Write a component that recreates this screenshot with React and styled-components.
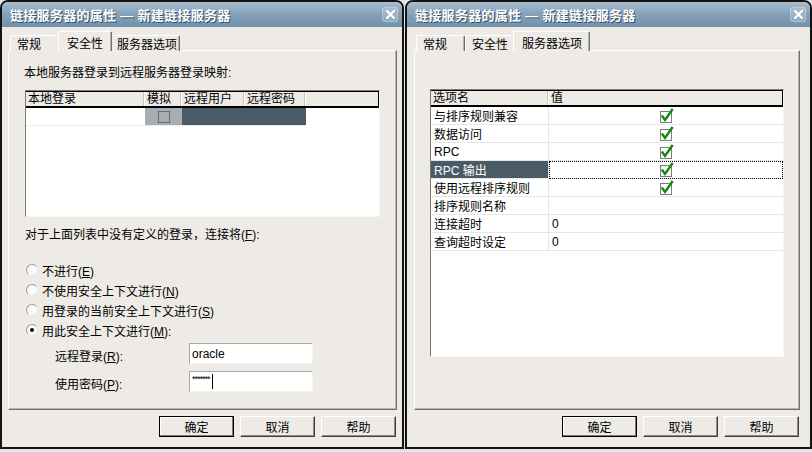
import React from "react";
import styled, { createGlobalStyle } from "styled-components";

const GlobalStyle = createGlobalStyle`
  html, body { margin:0; padding:0; background:#e4e4e4; }
  body {
    font-family: "Liberation Sans", "Noto Sans CJK SC", sans-serif;
    font-size:12px;
    color:#000;
  }
  * { box-sizing:border-box; }
`;

const Desktop = styled.div`
  display:flex;
  gap:1px;
  width:812px;
  height:452px;
  overflow:hidden;
  background:#e4e4e4;
`;

const Window = styled.div`
  width:${p => p.$w}px;
  flex:none;
  height:449px;
  background:#eeebe7;
  border:2px solid #141414;
  border-radius:8px 8px 0 0;
  overflow:hidden;
  display:flex;
  flex-direction:column;
`;

const TitleBar = styled.div`
  height:25px;
  flex:none;
  display:flex;
  align-items:center;
  justify-content:space-between;
  padding:0 4px 0 8px;
  background:linear-gradient(#a9bdcd, #87a3ba 45%, #7090ab);
  color:#fff;
  font-weight:bold;
  font-size:13px;
  text-shadow:1px 1px 0 #3c5064;
  letter-spacing:0.3px;
`;

const CloseBtn = styled.div`
  width:16px;
  height:15px;
  border-radius:3px;
  background:rgba(255,255,255,0.18);
  border:1px solid rgba(255,255,255,0.25);
  display:flex;
  align-items:center;
  justify-content:center;
`;

const Body = styled.div`
  display:flex;
  flex-direction:column;
  padding:5px ${p => p.$pr}px 0 ${p => p.$pl}px;
`;

const TabStrip = styled.div`
  display:flex;
  align-items:flex-end;
  height:19px;
  padding-left:2px;
  position:relative;
  z-index:1;
  margin-bottom:-1px;
`;

const Tab = styled.div`
  width:${p => p.$w}px;
  height:${p => (p.$active ? 20 : 16)}px;
  margin:0 ${p => (p.$active ? -2 : 0)}px;
  position:relative;
  z-index:${p => (p.$active ? 2 : 1)};
  padding-left:${p => (p.$active ? 8 : 6)}px;
  padding-top:${p => (p.$active ? 2 : 0)}px;
  display:flex;
  align-items:center;
  background:#eeebe7;
  border:1px solid;
  border-color:#fff #6e6e6e transparent #fff;
  border-bottom:none;
  border-radius:2px 2px 0 0;
  box-shadow:inset -1px 0 0 #b8b5b0;
  white-space:nowrap;
`;

const Panel = styled.div`
  height:360px;
  border:1px solid;
  border-color:#fff #6e6e6e #6e6e6e #fff;
  box-shadow:inset -1px -1px 0 #b8b5b0;
  display:flex;
  flex-direction:column;
  padding:${p => p.$pt}px 0 0 ${p => p.$pl}px;
`;

const Text = styled.div`
  height:14px;
  line-height:14px;
  margin-top:${p => p.$mt || 0}px;
  margin-left:${p => p.$ml || 0}px;
  white-space:nowrap;
`;

const U = styled.span`
  text-decoration:underline;
`;

const Grid = styled.div`
  width:${p => p.$w}px;
  height:${p => p.$h}px;
  margin-top:${p => p.$mt || 0}px;
  background:#fff;
  border:1px solid;
  border-color:#7a7a7a #f6f6f6 #f6f6f6 #7a7a7a;
  display:flex;
  flex-direction:column;
`;

const HeaderRow = styled.div`
  display:flex;
  height:17px;
  background:#eeebe7;
  border-top:1px solid #000;
  border-bottom:2px solid #000;
  border-right:1px solid #000;
`;

const HeadCell = styled.div`
  width:${p => (p.$w ? p.$w + "px" : "auto")};
  flex:${p => (p.$w ? "none" : "1")};
  padding-left:2px;
  line-height:14px;
  border-right:${p => (p.$w ? "1px solid #fff" : "none")};
  box-shadow:${p => (p.$w ? "inset -1px 0 0 #c8c5bf" : "none")};
  white-space:nowrap;
`;

const Row = styled.div`
  display:flex;
  height:18px;
  flex:none;
`;

const Cell = styled.div`
  width:${p => (p.$w ? p.$w + "px" : "auto")};
  flex:${p => (p.$w ? "none" : "1")};
  display:flex;
  align-items:center;
  justify-content:${p => (p.$center ? "center" : "flex-start")};
  padding-left:${p => p.$pl || 0}px;
  background:${p => p.$bg || "transparent"};
  color:${p => p.$color || "#000"};
  border-bottom:1px solid ${p => p.$line || "#e6e6e6"};
  border-right:${p => (p.$sep ? "1px solid #e6e6e6" : "none")};
  outline:${p => (p.$focus ? "1px dotted #000" : "none")};
  outline-offset:-1px;
  white-space:nowrap;
`;

const Box = styled.div`
  width:12px;
  height:12px;
  border:1px solid #6a7077;
`;

const RadioRow = styled.div`
  display:flex;
  align-items:center;
  height:20px;
  margin-left:1px;
  margin-top:${p => p.$mt || 0}px;
  gap:4px;
`;

const Radio = styled.div`
  width:12px;
  height:12px;
  border-radius:50%;
  background:#fbfbfa;
  border:1px solid;
  border-color:#9a9a9a #e8e8e8 #e8e8e8 #9a9a9a;
  display:flex;
  align-items:center;
  justify-content:center;
  &::after {
    content:"";
    display:${p => (p.$on ? "block" : "none")};
    width:4px;
    height:4px;
    border-radius:50%;
    background:#000;
  }
`;

const FieldRow = styled.div`
  display:flex;
  align-items:center;
  height:21px;
  margin-top:${p => p.$mt || 0}px;
  padding-left:30px;
`;

const FieldLabel = styled.div`
  width:134px;
  padding-top:${p => p.$pt || 0}px;
`;

const Input = styled.div`
  width:124px;
  height:21px;
  background:#fff;
  border:1px solid;
  border-color:#a8a8a8 #f4f4f4 #f4f4f4 #a8a8a8;
  padding-left:2px;
  display:flex;
  align-items:center;
  font-size:12px;
`;

const Stars = styled.span`
  font-size:9px;
  letter-spacing:-1px;
  line-height:6px;
  align-self:flex-start;
  margin-top:4px;
`;

const Caret = styled.span`
  width:1px;
  height:15px;
  background:#000;
  margin-left:2px;
`;

const ButtonRow = styled.div`
  display:flex;
  justify-content:flex-end;
  gap:6px;
  margin-top:6px;
  padding-right:1px;
`;

const Button = styled.div`
  width:75px;
  height:21px;
  display:flex;
  align-items:center;
  justify-content:center;
  background:#eeebe7;
  border:1px solid;
  border-color:${p => (p.$default ? "#000" : "#fff #404040 #404040 #fff")};
  box-shadow:${p =>
    p.$default
      ? "inset -1px -1px 0 #7a7a7a, inset 1px 1px 0 #fff"
      : "inset -1px -1px 0 #8a8a8a"};
`;

function CloseIcon() {
  return (
    <svg width="9" height="9" viewBox="0 0 9 9">
      <path d="M1 1 L8 8 M8 1 L1 8" stroke="#fff" strokeWidth="2.2" strokeLinecap="square" />
    </svg>
  );
}

function Check() {
  return (
    <svg width="16" height="16" viewBox="0 0 16 16">
      <rect x="2.5" y="3.5" width="11" height="11" fill="#fff" stroke="#7c7c7c" />
      <path d="M4.5 8.5 L7 12 L14 2" stroke="#0f8a0f" strokeWidth="2.4" fill="none" strokeLinecap="square" />
    </svg>
  );
}

function Title() {
  return (
    <TitleBar>
      <span>链接服务器的属性 — 新建链接服务器</span>
      <CloseBtn><CloseIcon /></CloseBtn>
    </TitleBar>
  );
}

function Buttons() {
  return (
    <ButtonRow>
      <Button $default>确定</Button>
      <Button>取消</Button>
      <Button>帮助</Button>
    </ButtonRow>
  );
}

function Choice({ on, text, k, tail = "", mt }) {
  return (
    <RadioRow $mt={mt}>
      <Radio $on={on} />
      <span>
        {text}(<U>{k}</U>){tail}
      </span>
    </RadioRow>
  );
}

function SecurityDialog() {
  return (
    <Window $w={404}>
      <Title />
      <Body $pl={6} $pr={5}>
        <TabStrip>
          <Tab $w={50}>常规</Tab>
          <Tab $w={54} $active>安全性</Tab>
          <Tab $w={70}>服务器选项</Tab>
        </TabStrip>
        <Panel $pt={15} $pl={16}>
          <Text $ml={-1}>本地服务器登录到远程服务器登录映射:</Text>
          <Grid $w={355} $h={127} $mt={10}>
            <HeaderRow>
              <HeadCell $w={119}>本地登录</HeadCell>
              <HeadCell $w={37}>模拟</HeadCell>
              <HeadCell $w={63}>远程用户</HeadCell>
              <HeadCell $w={61}>远程密码</HeadCell>
              <HeadCell />
            </HeaderRow>
            <Row>
              <Cell $w={119} $line="#ebebeb" />
              <Cell $w={37} $bg="#a8adb2" $center $line="#ebebeb">
                <Box />
              </Cell>
              <Cell $w={124} $bg="#4b5a67" $line="#ebebeb" />
              <Cell $line="#fff" />
            </Row>
          </Grid>
          <Text $mt={11}>
            对于上面列表中没有定义的登录，连接将(<U>F</U>):
          </Text>
          <Choice mt={18} text="不进行" k="E" />
          <Choice text="不使用安全上下文进行" k="N" />
          <Choice text="用登录的当前安全上下文进行" k="S" />
          <Choice on text="用此安全上下文进行" k="M" tail=":" />
          <FieldRow $mt={3}>
            <FieldLabel $pt={4}>远程登录(<U>R</U>):</FieldLabel>
            <Input>oracle</Input>
          </FieldRow>
          <FieldRow $mt={7}>
            <FieldLabel $pt={4}>使用密码(<U>P</U>):</FieldLabel>
            <Input>
              <Stars>*******</Stars>
              <Caret />
            </Input>
          </FieldRow>
        </Panel>
        <Buttons />
      </Body>
    </Window>
  );
}

const options = [
  { name: "与排序规则兼容", check: true },
  { name: "数据访问", check: true },
  { name: "RPC", check: true },
  { name: "RPC 输出", check: true, selected: true },
  { name: "使用远程排序规则", check: true },
  { name: "排序规则名称" },
  { name: "连接超时", value: "0" },
  { name: "查询超时设定", value: "0" },
];

function OptionsDialog() {
  return (
    <Window $w={407}>
      <Title />
      <Body $pl={7} $pr={10}>
        <TabStrip>
          <Tab $w={49}>常规</Tab>
          <Tab $w={50}>安全性</Tab>
          <Tab $w={77} $active>服务器选项</Tab>
        </TabStrip>
        <Panel $pt={38} $pl={15}>
          <Grid $w={354} $h={268}>
            <HeaderRow>
              <HeadCell $w={118}>选项名</HeadCell>
              <HeadCell>值</HeadCell>
            </HeaderRow>
            {options.map(o => (
              <Row key={o.name}>
                <Cell
                  $w={118}
                  $pl={3}
                  $sep
                  $bg={o.selected ? "#4b5a67" : undefined}
                  $color={o.selected ? "#fff" : undefined}
                >
                  {o.name}
                </Cell>
                <Cell $pl={o.check ? 0 : 3} $center={o.check} $focus={o.selected}>
                  {o.check ? <Check /> : o.value}
                </Cell>
              </Row>
            ))}
          </Grid>
        </Panel>
        <Buttons />
      </Body>
    </Window>
  );
}

export default function App() {
  return (
    <>
      <GlobalStyle />
      <Desktop>
        <SecurityDialog />
        <OptionsDialog />
      </Desktop>
    </>
  );
}
